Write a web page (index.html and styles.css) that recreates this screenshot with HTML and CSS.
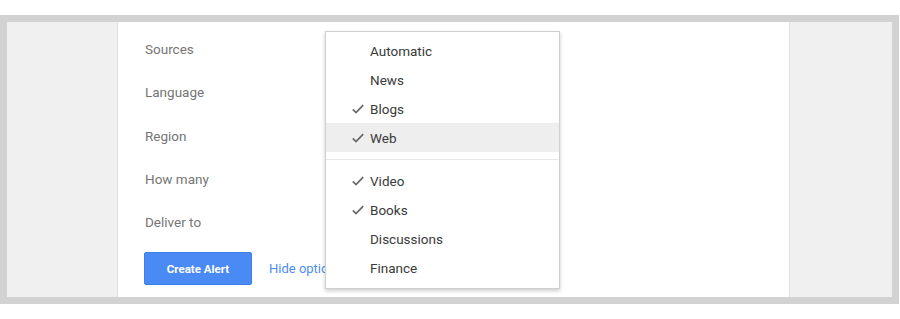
FILE: index.html
```html
<!DOCTYPE html>
<html>
<head>
<meta charset="utf-8">
<link rel="stylesheet" href="styles.css">
</head>
<body>
<div class="frame">
  <div class="side side-left"></div>
  <div class="panel">
    <div class="rows">
      <div class="row">Sources</div>
      <div class="row">Language</div>
      <div class="row">Region</div>
      <div class="row">How many</div>
      <div class="row">Deliver to</div>
    </div>
    <div class="actions">
      <button class="btn">Create Alert</button>
      <a class="link">Hide options</a>
    </div>
    <div class="menu">
      <div class="item"><span class="check"></span>Automatic</div>
      <div class="item"><span class="check"></span>News</div>
      <div class="item"><span class="check"><svg viewBox="0 0 12 10" width="12" height="10"><path d="M0.8 5.4 L4 8.5 L11.2 1.2" fill="none" stroke="#666" stroke-width="1.7"/></svg></span>Blogs</div>
      <div class="item active"><span class="check"><svg viewBox="0 0 12 10" width="12" height="10"><path d="M0.8 5.4 L4 8.5 L11.2 1.2" fill="none" stroke="#666" stroke-width="1.7"/></svg></span>Web</div>
      <div class="sep"></div>
      <div class="item"><span class="check"><svg viewBox="0 0 12 10" width="12" height="10"><path d="M0.8 5.4 L4 8.5 L11.2 1.2" fill="none" stroke="#666" stroke-width="1.7"/></svg></span>Video</div>
      <div class="item"><span class="check"><svg viewBox="0 0 12 10" width="12" height="10"><path d="M0.8 5.4 L4 8.5 L11.2 1.2" fill="none" stroke="#666" stroke-width="1.7"/></svg></span>Books</div>
      <div class="item"><span class="check"></span>Discussions</div>
      <div class="item"><span class="check"></span>Finance</div>
    </div>
  </div>
  <div class="side side-right"></div>
</div>
</body>
</html>
```
FILE: styles.css
```css
html, body {
  margin: 0;
  padding: 0;
  background: #fff;
}
body {
  font-family: Roboto, "Liberation Sans", Arial, sans-serif;
  padding-top: 15px;
}
.frame {
  width: 885px;
  height: 275px;
  border: 7px solid #d2d2d2;
  display: grid;
  grid-template-columns: 110px 1fr 102px;
  background: #f0f0f0;
}
.side {
  background: #f0f0f0;
}
.panel {
  position: relative;
  background: #fff;
  border-left: 1px solid #e0e0e0;
  border-right: 1px solid #e0e0e0;
  padding: 17px 0 0 27px;
}
.rows {
  display: flex;
  flex-direction: column;
  gap: 23.3px;
}
.row {
  height: 20px;
  line-height: 20px;
  font-size: 13.5px;
  color: #757575;
}
.actions {
  display: flex;
  align-items: center;
  gap: 17px;
  margin-top: 20px;
}
.btn {
  width: 108px;
  height: 33px;
  background: #4a8af4;
  border: 1px solid #3f7fe8;
  border-radius: 2px;
  color: #fff;
  font-family: Roboto, "Liberation Sans", Arial, sans-serif;
  font-weight: bold;
  font-size: 11.5px;
  padding: 0;
  margin-left: -1px;
}
.link {
  color: #4d8ef0;
  font-size: 13px;
}
.menu {
  position: absolute;
  left: 207px;
  top: 9px;
  width: 233px;
  background: #fff;
  border: 1px solid #cfcfcf;
  box-shadow: 0 2px 4px rgba(0,0,0,0.2);
  padding: 4px 0 6px 0;
  display: flex;
  flex-direction: column;
}
.item {
  height: 29px;
  display: flex;
  align-items: center;
  font-size: 13.5px;
  color: #3a3a3a;
}
.item.active {
  background: #eeeeee;
}
.check {
  width: 44px;
  display: flex;
  justify-content: flex-end;
  padding-right: 6px;
  box-sizing: border-box;
}
.check svg {
  display: block;
}
.sep {
  height: 1px;
  background: #e8e8e8;
  margin: 6.5px 0 6.5px;
}
```
